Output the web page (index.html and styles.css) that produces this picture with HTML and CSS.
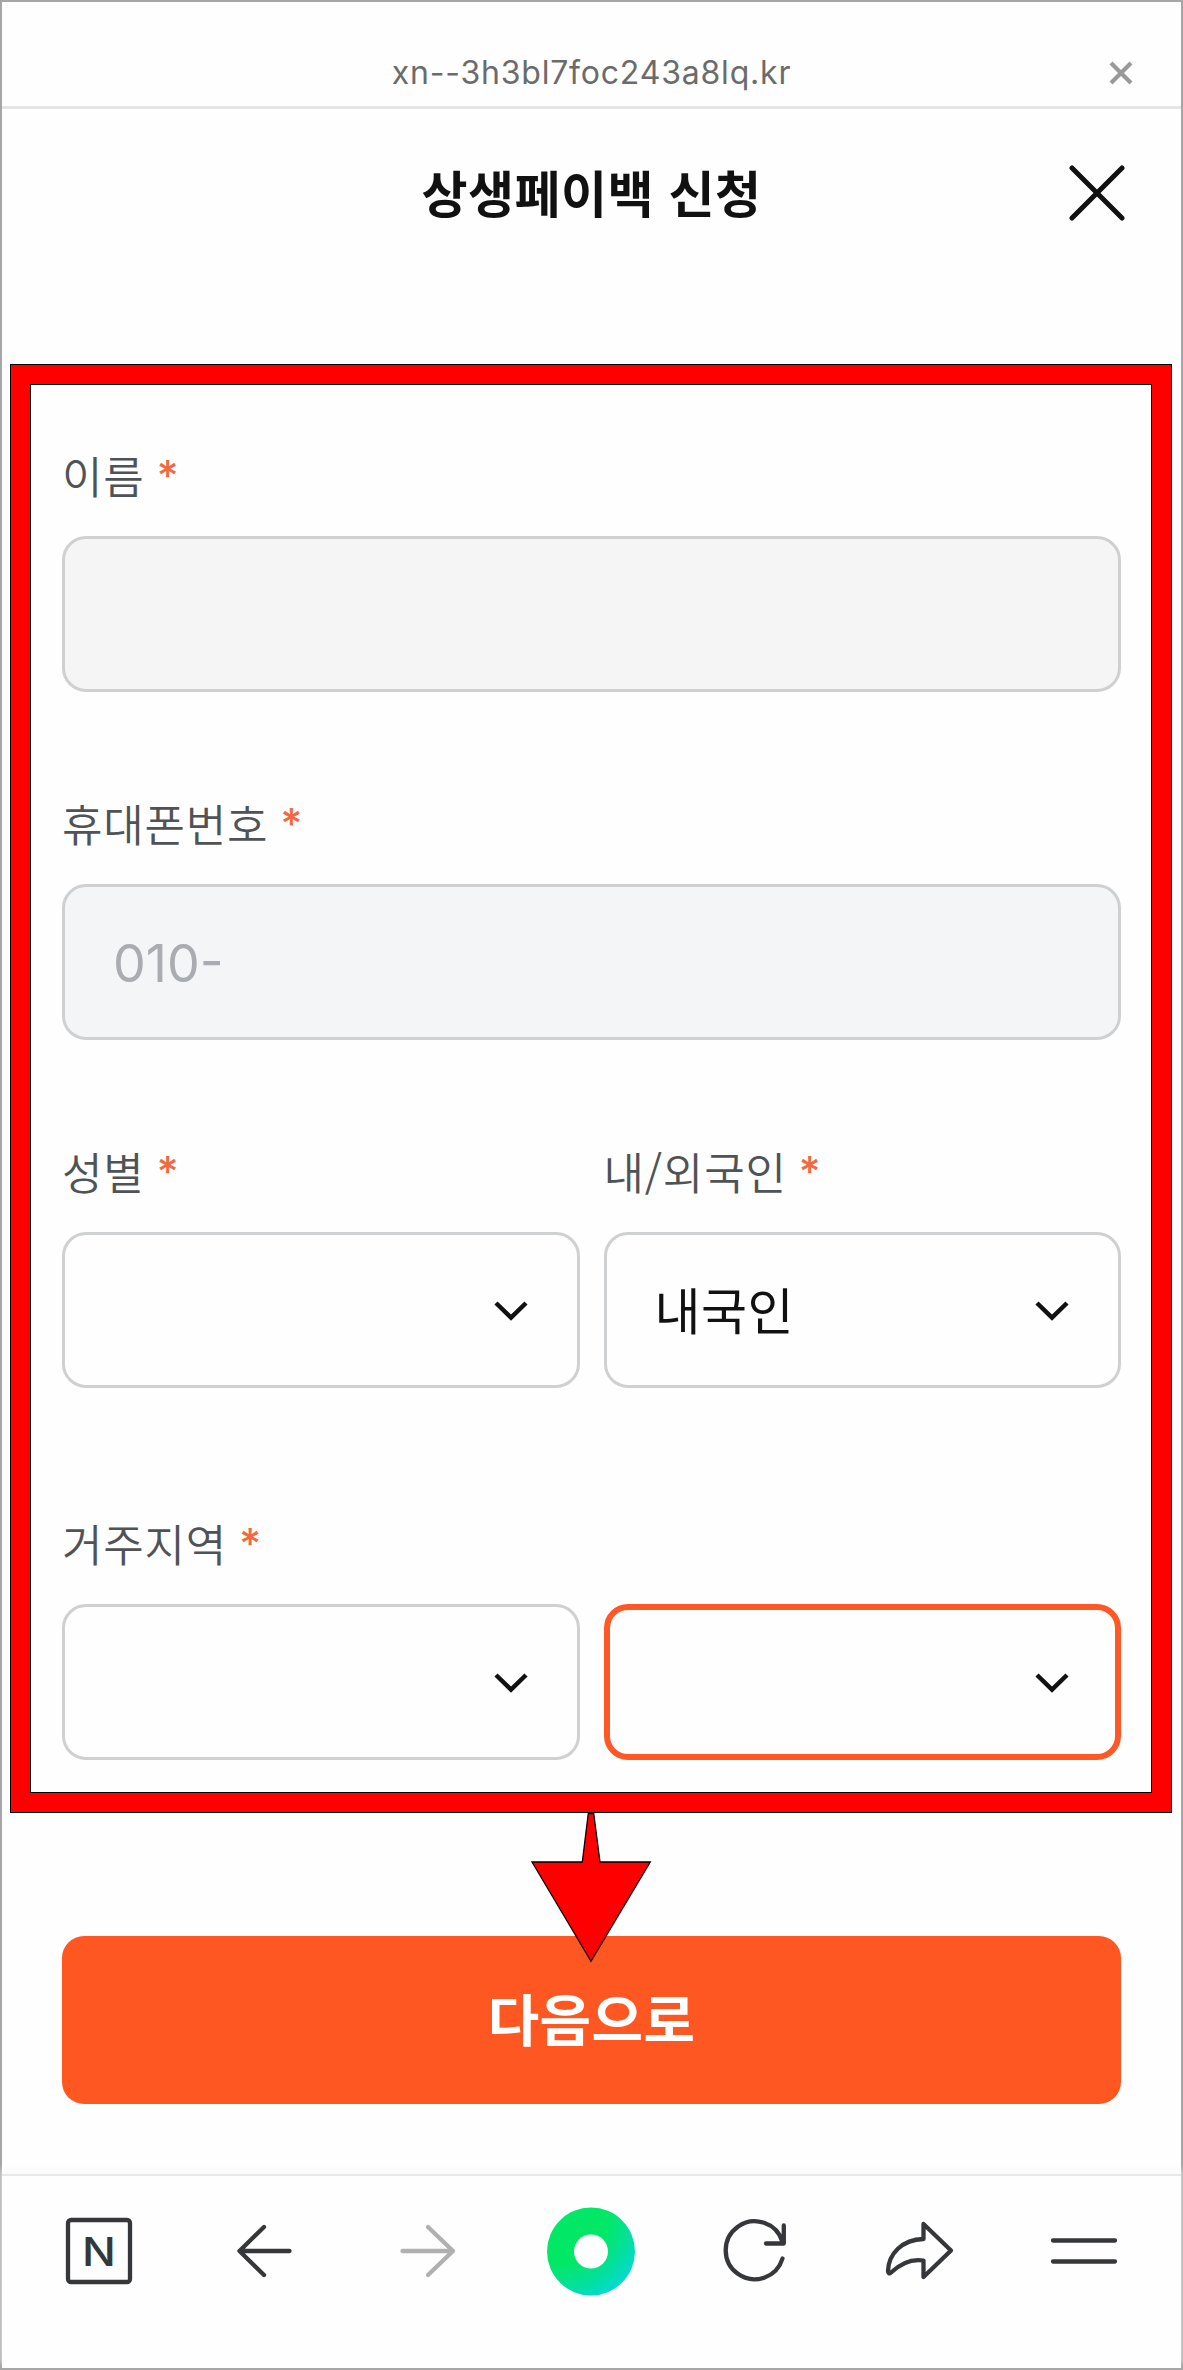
FILE: index.html
```html
<!DOCTYPE html>
<html lang="ko">
<head>
  <meta charset="UTF-8">
  <title>상생페이백 신청</title>
  <link rel="stylesheet" href="styles.css">
</head>
<body>

  <div class="screen">

    <!-- Address bar -->
    <div class="address-bar">
      <span class="address">xn--3h3bl7foc243a8lq.kr</span>
      <svg class="address-close" width="24" height="24" viewBox="0 0 24 24"><path d="M2 2L22 22M22 2L2 22"/></svg>
    </div>

    <header class="header">
      <h1>상생페이백 신청</h1>
      <svg class="header-close" width="56" height="56" viewBox="0 0 56 56"><path d="M3 3L53 53M53 3L3 53"/></svg>
    </header>

    <form class="form">
      <div class="field">
        <label>이름 <span class="required">*</span></label>
        <div class="input disabled"></div>
      </div>

      <div class="field">
        <label>휴대폰번호 <span class="required">*</span></label>
        <div class="input disabled placeholder">010-</div>
      </div>

      <div class="row">
        <div class="field">
          <label>성별 <span class="required">*</span></label>
          <div class="input select">
            <span></span>
            <svg class="chevron" width="34" height="22" viewBox="0 0 34 22"><path d="M2 4L17 18.500L32 4"/></svg>
          </div>
        </div>
        <div class="field">
          <label>내/외국인 <span class="required">*</span></label>
          <div class="input select">
            <span class="value">내국인</span>
            <svg class="chevron" width="34" height="22" viewBox="0 0 34 22"><path d="M2 4L17 18.500L32 4"/></svg>
          </div>
        </div>
      </div>

      <div class="field region">
        <label>거주지역 <span class="required">*</span></label>
        <div class="row">
          <div class="input select">
            <span></span>
            <svg class="chevron" width="34" height="22" viewBox="0 0 34 22"><path d="M2 4L17 18.500L32 4"/></svg>
          </div>
          <div class="input select active">
            <span></span>
            <svg class="chevron" width="34" height="22" viewBox="0 0 34 22"><path d="M2 4L17 18.500L32 4"/></svg>
          </div>
        </div>
      </div>
    </form>

    <div class="submit">
      <svg class="pointer" width="122" height="152" viewBox="0 0 122 152"><path d="M58.3 1.500H63.7L70 50H120.3L61 149.300L2 50H52.3Z"/></svg>
      <button type="button">다음으로</button>
    </div>

    <!-- Bottom toolbar -->
    <nav class="toolbar">
      <svg class="icon" width="90" height="90" viewBox="0 0 90 90">
        <rect x="14" y="14" width="62" height="62" rx="3"/>
        <text class="icon-letter" transform="translate(45 59.500) scale(1.12 1)">N</text>
      </svg>
      <svg class="icon" width="90" height="90" viewBox="0 0 90 90"><path d="M71.500 45H21.500M46 21L21.500 45L46 69"/></svg>
      <svg class="icon muted" width="90" height="90" viewBox="0 0 90 90"><path d="M20.500 45H71M46 21L71 45L46 69"/></svg>
      <svg width="90" height="90" viewBox="0 0 90 90">
        <defs>
          <radialGradient id="ring" cx="0.15" cy="0.1" r="1.1">
            <stop offset="0.5" stop-color="#03e767"/>
            <stop offset="0.75" stop-color="#03dfa0"/>
            <stop offset="1" stop-color="#04d8e4"/>
          </radialGradient>
        </defs>
        <circle cx="45" cy="45.5" r="44" fill="url(#ring)"/>
        <circle cx="45" cy="45.5" r="17" fill="#fff"/>
      </svg>
      <svg class="icon" width="90" height="90" viewBox="0 0 90 90"><path d="M71.500 52.500A29 29 0 1 1 71.500 36M72.800 19.500V37.500H55"/></svg>
      <svg class="icon" width="90" height="90" viewBox="0 0 90 90"><path d="M48.500 18L76 44.500L48.500 71V54.500C34 52 24 59 16 66.500C14 68 13 67 13 65C13.500 48 27 33.500 48.500 33Z"/></svg>
      <svg class="icon" width="90" height="90" viewBox="0 0 90 90"><path d="M14 34.500H76M14 55.500H76"/></svg>
    </nav>

  </div>

</body>
</html>
```
FILE: styles.css
```css
* {
  box-sizing: border-box;
}

body {
  margin: 0;
  background: #fff;
  font-family: Inter, 'Noto Sans CJK KR', sans-serif;
}

svg {
  display: block;
  fill: none;
}

.screen {
  display: flex;
  flex-direction: column;
  width: 1183px;
  height: 2370px;
  border: 2px solid #a6a6a7;
  background: #fefefe;
}

.address-bar {
  display: grid;
  grid-template-columns: 1fr auto 1fr;
  align-items: center;
  height: 107px;
  padding: 38px 48px 0;
  border-bottom: 3px solid #e5e5e5;
}

.address {
  grid-column: 2;
  font-size: 32px;
  line-height: 40px;
  letter-spacing: 0.8px;
  color: #6b6b6b;
}

.address-close {
  justify-self: end;
  stroke: #999;
  stroke-width: 4.2;
}

.header {
  display: grid;
  grid-template-columns: 1fr auto 1fr;
  align-items: center;
  height: 168px;
  margin-bottom: 88px;
  padding: 0 56px;
}

h1 {
  grid-column: 2;
  margin: 0;
  padding-bottom: 5px;
  font-family: 'Noto Sans CJK KR', sans-serif;
  font-size: 50px;
  font-weight: 700;
  line-height: 60px;
  letter-spacing: 0.5px;
  color: #111;
}

.header-close {
  justify-self: end;
  stroke: #111;
  stroke-width: 5;
  stroke-linecap: round;
}

/* red frame with a thin black line on both sides */
.form {
  height: 1447px;
  margin: 0 10px 0 9px;
  padding: 63px 31px 0 32px;
  border: 19px solid #f00;
  outline: 1px solid #000;
  box-shadow: inset 0 0 0 1px #000;
}

.field {
  margin-bottom: 103px;
}

.row {
  display: grid;
  grid-template-columns: 1fr 1fr;
  gap: 24px;
}

.region {
  margin-top: 24px;
}

label {
  display: block;
  height: 56px;
  margin-bottom: 33px;
  font-family: 'Noto Sans CJK KR', sans-serif;
  font-size: 44px;
  font-weight: 350;
  line-height: 56px;
  letter-spacing: 0.8px;
  color: #505356;
}

.required {
  position: relative;
  top: -3px;
  left: -1px;
  font-family: Inter, sans-serif;
  font-size: 42px;
  font-weight: 500;
  line-height: 1;
  color: #f4683f;
}

.input {
  display: flex;
  align-items: center;
  height: 156px;
  padding: 0 49px 0 48px;
  border: 3px solid #cfd0d1;
  border-radius: 24px;
  font-size: 50px;
  color: #111;
}

.disabled {
  background: #f5f5f5;
}

.placeholder {
  padding-top: 2px;
  background: #f4f5f6;
  font-size: 52px;
  color: #a9acb1;
}

.select {
  justify-content: space-between;
}

.value {
  padding-bottom: 5px;
  letter-spacing: 0.5px;
}

.active {
  padding: 0 46px;
  border: 6px solid #ff5726;
}

.chevron {
  stroke: #111;
  stroke-width: 4.5;
}

.submit {
  position: relative;
  padding: 124px 60px 0;
}

.submit button {
  display: block;
  width: 1059px;
  height: 168px;
  padding: 0 0 8px;
  border: 0;
  border-radius: 22px;
  background: #ff5722;
  font-family: 'Noto Sans CJK KR', sans-serif;
  font-size: 56px;
  font-weight: 700;
  letter-spacing: 0.4px;
  color: #fff;
}

.pointer {
  position: absolute;
  top: 0;
  left: 528px;
  fill: #f00;
  stroke: #000;
  stroke-width: 1.3;
}

.toolbar {
  display: grid;
  grid-template-columns: repeat(7, 1fr);
  justify-items: center;
  height: 194px;
  margin-top: auto;
  padding: 30px 15px 0;
  border-top: 2px solid #e7e8ea;
  box-shadow: 0 -5px 5px #fafafa;
}

.icon {
  stroke: #35373a;
  stroke-width: 4.3;
  stroke-linecap: round;
  stroke-linejoin: round;
}

.muted {
  stroke: #b0b0b0;
}

.icon-letter {
  fill: #35373a;
  stroke: none;
  font-family: Inter, sans-serif;
  font-size: 40px;
  font-weight: 500;
  text-anchor: middle;
}
```
